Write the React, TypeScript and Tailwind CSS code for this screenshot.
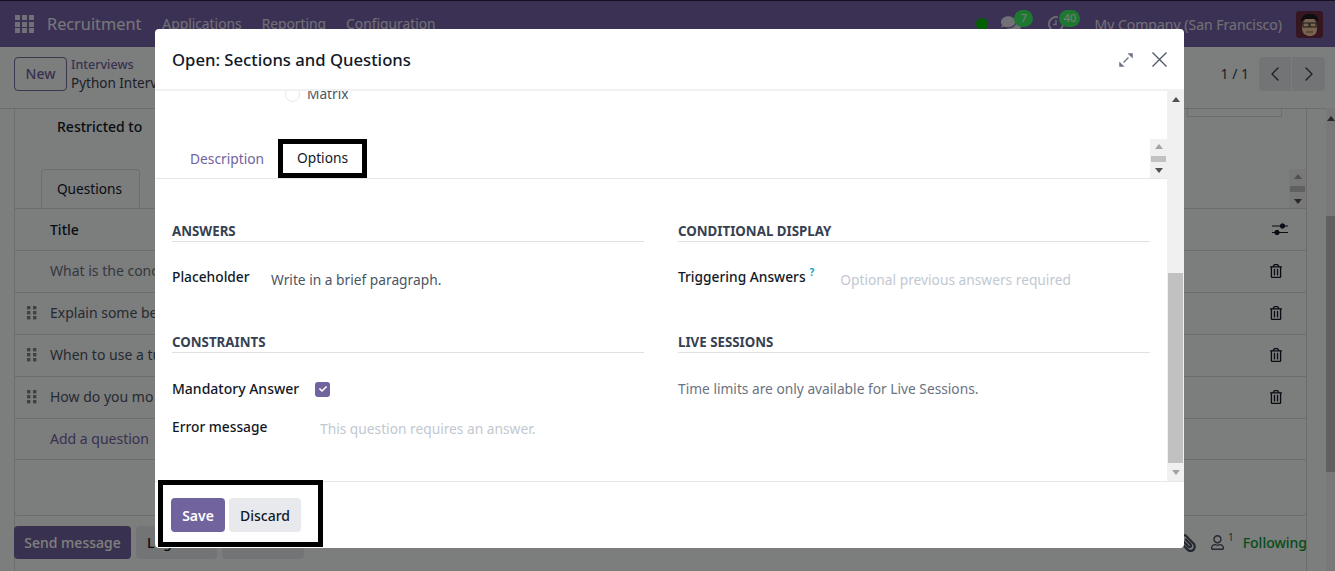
import { ChevronLeft, ChevronRight } from "lucide-react";
import { FaCheck, FaComments, FaPaperclip, FaRegTrashAlt, FaRegUser } from "react-icons/fa";

const rows = [
  { title: "What is the conc", grip: false },
  { title: "Explain some be", grip: true },
  { title: "When to use a tu", grip: true },
  { title: "How do you mo", grip: true },
];

function Grip() {
  return (
    <svg width="10" height="14" viewBox="0 0 10 14" className="fill-[#7b8290]">
      <rect x="0" y="0" width="3.4" height="3.4" />
      <rect x="6" y="0" width="3.4" height="3.4" />
      <rect x="0" y="5" width="3.4" height="3.4" />
      <rect x="6" y="5" width="3.4" height="3.4" />
      <rect x="0" y="10" width="3.4" height="3.4" />
      <rect x="6" y="10" width="3.4" height="3.4" />
    </svg>
  );
}

function MiniScroll() {
  return (
    <div className="w-[17px] h-full flex flex-col items-center justify-between py-[5px] bg-[#f0f0f0]">
      <div className="w-0 h-0 border-x-[4px] border-x-transparent border-b-[5px] border-b-[#a3a3a3]" />
      <div className="w-[15px] h-[6px] bg-[#c1c1c1]" />
      <div className="w-0 h-0 border-x-[4px] border-x-transparent border-t-[5px] border-t-[#505050]" />
    </div>
  );
}

function Background() {
  return (
    <div className="w-full h-full flex flex-col bg-[#f9fafb]">
      <div className="h-[47px] shrink-0 border-t border-[#2a2140] bg-[#7662a8] flex items-center text-white/90 pl-[15px]">
        <div className="grid grid-cols-3 gap-[1.5px] w-[19px] mr-[13px]">
          {Array.from({ length: 9 }).map((_, i) => (
            <div key={i} className="h-[5px] bg-white/80" />
          ))}
        </div>
        <span className="text-[16.3px] mr-[21px]">Recruitment</span>
        <span className="text-[13.8px] mr-[20px] text-white/80">Applications</span>
        <span className="text-[13.8px] mr-[20px] text-white/80">Reporting</span>
        <span className="text-[13.8px] text-white/80">Configuration</span>
        <div className="ml-auto flex items-center pr-[12px]">
          <div className="w-[12px] h-[12px] rounded-full bg-[#00c000] mr-[13px]" />
          <div className="relative mr-[27px]">
            <FaComments className="text-[20px] text-white/80" />
            <span className="absolute -top-[4px] left-[13px] w-[19px] h-[17px] rounded-full bg-[#3cf064] text-[11px] flex items-center justify-center">7</span>
          </div>
          <div className="relative mr-[30px] w-[16px] h-[16px]">
            <svg width="16" height="16" viewBox="0 0 16 16" fill="none" className="stroke-white/70">
              <path d="M10 1.4A7 7 0 1 0 15 8" strokeWidth="2" />
              <path d="M8 4v4.5H5" strokeWidth="1.5" />
            </svg>
            <span className="absolute -top-[6px] left-[11px] w-[21px] h-[17px] rounded-full bg-[#3cf064] text-[11px] flex items-center justify-center">40</span>
          </div>
          <span className="text-[14px] text-white/80 mr-[14px]">My Company (San Francisco)</span>
          <svg width="27" height="27" viewBox="0 0 27 27">
            <rect width="27" height="27" rx="3" fill="#6d2f43" />
            <path d="M6 17c0-7 3-10 8-10s7 4 7 10-3 8-7 8-8-2-8-8z" fill="#f0c9a0" />
            <path d="M5 11c0-6 5-9 10-8 5 0 8 3 7 8l-3-3H9z" fill="#1d1d1d" />
            <rect x="7" y="12" width="6" height="4" fill="none" stroke="#333" />
            <rect x="14" y="12" width="6" height="4" fill="none" stroke="#333" />
            <path d="M10 21h7" stroke="#9a5a3a" />
          </svg>
        </div>
      </div>

      <div className="h-[62px] shrink-0 border-b border-[#d8dadd] flex items-center pl-[14px] pr-[10px] pb-[8px]">
        <div className="w-[53px] h-[34px] border border-[#776a9b] rounded-[4px] flex items-center justify-center text-[14px] font-medium text-[#71639e]">New</div>
        <div className="ml-[4px] leading-[19px]">
          <div className="text-[12.5px] font-medium text-[#71639e]">Interviews</div>
          <div className="text-[13.5px] text-[#374151]">Python Interview</div>
        </div>
        <div className="ml-auto flex items-center">
          <span className="text-[14px] text-[#374151] mr-[10px]">1 / 1</span>
          <div className="w-[32px] h-[34px] bg-[#e7e9ed] rounded-l-[4px] flex items-center justify-center">
            <ChevronLeft size={24} strokeWidth={1.4} className="text-[#374151]" />
          </div>
          <div className="w-[33px] h-[34px] ml-px bg-[#e7e9ed] rounded-r-[4px] flex items-center justify-center">
            <ChevronRight size={24} strokeWidth={1.4} className="text-[#374151]" />
          </div>
        </div>
      </div>

      <div className="flex-1 flex min-h-0">
        <div className="w-[1293px] ml-[14px] border-x border-[#d8dadd] flex flex-col">
          <div className="h-[60px] shrink-0 pl-[42px] flex justify-between text-[14px] font-medium text-[#111827]">
            <span className="pt-[7px]">Restricted to</span>
            <div className="w-[95px] h-[8px] mr-[24px] border border-t-0 border-[#d8dadd]" />
          </div>
          <div className="h-[40px] shrink-0 pl-[26px] flex">
            <div className="w-[99px] border border-b-0 border-[#d8dadd] rounded-t-[4px] flex items-center justify-center text-[13.7px] text-[#111827] pr-[2px]">Questions</div>
            <div className="ml-auto"><MiniScroll /></div>
          </div>
        </div>
      </div>
    </div>
  );
}

function BackgroundTable() {
  return (
    <div className="absolute left-[14px] top-[208px] w-[1293px] h-[308px] border border-[#d8dadd] rounded-b-[4px] flex flex-col text-[14px]">
      <div className="h-[42px] shrink-0 border-b border-[#d8dadd] flex items-center pl-[35px] pr-[18px] pb-[1px] justify-between">
        <span className="font-medium text-[#111827]">Title</span>
        <svg width="16" height="14" viewBox="0 0 16 14" className="stroke-[#111827] fill-[#111827]">
          <path d="M0 4h16M0 10.5h16" strokeWidth="1.2" />
          <circle cx="10.5" cy="4" r="2.2" />
          <circle cx="5" cy="10.5" r="2.2" />
        </svg>
      </div>
      {rows.map((r) => (
        <div key={r.title} className="h-[42px] shrink-0 border-b border-[#d8dadd] flex items-center pr-[23px] pb-[2px]">
          <div className="w-[35px] pl-[12px] flex items-center">{r.grip && <Grip />}</div>
          <span className={r.grip ? "text-[#4b5563]" : "text-[#6b7280]"}>{r.title}</span>
          <FaRegTrashAlt className="ml-auto text-[14px] text-[#111827]" />
        </div>
      ))}
      <div className="h-[41px] shrink-0 border-b border-[#d8dadd] flex items-center pl-[35px] pb-[1px] text-[#71639e]">Add a question</div>
    </div>
  );
}

function BackgroundFooter() {
  return (
    <div className="absolute left-[14px] right-0 top-[526px] h-[33px] flex items-center text-[14px]">
      <div className="w-[117px] h-full rounded-[4px] bg-[#71639e] text-white font-medium flex items-center justify-center">Send message</div>
      <div className="w-[81px] h-full ml-[5px] rounded-[4px] bg-[#e7e9ed] flex items-center pl-[11px] font-medium text-[#111827]">Log note</div>
      <div className="w-[82px] h-full ml-[5px] rounded-[4px] bg-[#e7e9ed]" />
      <div className="ml-auto mr-[28px] flex items-center">
        <FaPaperclip className="text-[18px] text-[#4b5563] mr-[13px] -scale-x-100" />
        <FaRegUser className="text-[15px] text-[#4b5563]" />
        <span className="text-[10px] text-[#4b5563] -mt-[10px] ml-[3px] mr-[9px]">1</span>
        <span className="font-medium text-[#0a9a30]">Following</span>
      </div>
    </div>
  );
}

function SectionTitle({ children }: { children: React.ReactNode }) {
  return (
    <div className="h-[21px] border-b border-[#dee2e6] text-[13.3px] leading-[20px] font-bold text-[#374151]">
      {children}
    </div>
  );
}

function Modal() {
  return (
    <div className="absolute left-[155px] top-[29px] w-[1029px] h-[519px] bg-white rounded-[4px] flex flex-col overflow-hidden">
      <div className="h-[62px] shrink-0 border-b-2 border-[#f1f1f2] flex items-center pl-[17px] pr-[17px] pt-[1px]">
        <h1 className="text-[16.7px] font-medium text-[#111827]">Open: Sections and Questions</h1>
        <svg width="14" height="14" viewBox="0 0 14 14" className="ml-auto mr-[19px] fill-[#6b7280] stroke-[#6b7280]">
          <path d="M4.5 9.5l5-5" strokeWidth="1.2" />
          <path d="M9 0.5h4.5v4.5zM0.5 9v4.5H5z" strokeWidth="0.5" />
        </svg>
        <svg width="15" height="15" viewBox="0 0 15 15" className="stroke-[#4b5563]">
          <path d="M0.5 0.5l14 14M14.5 0.5l-14 14" strokeWidth="1.3" />
        </svg>
      </div>

      <div className="flex-1 flex min-h-0">
        <div className="flex-1 min-w-0 flex flex-col overflow-hidden">
          <div className="h-[55px] shrink-0 pl-[130px] flex items-start -mt-[6px]">
            <div className="w-[15px] h-[15px] mt-[2px] rounded-full border border-[#e5e7eb]" />
            <span className="ml-[7px] text-[13.7px] leading-[18px] text-[#4b5563]">Matrix</span>
          </div>
          <div className="h-[39px] shrink-0 border-b border-[#e5e7eb] flex relative text-[13.75px]">
            <div className="w-[123px] pl-[35px] flex items-center text-[#71639e]">Description</div>
            <div className="w-[89px] -mt-[1px] border-[5px] border-black flex items-center justify-center text-[#111827]">Options</div>
            <div className="absolute right-0 -top-[1px] h-[39px]"><MiniScroll /></div>
          </div>

          <div className="grid grid-cols-2 gap-x-[34px] pl-[17px] pr-[17px] pt-[42px] text-[13.75px]">
            <div className="flex flex-col">
              <SectionTitle>ANSWERS</SectionTitle>
              <div className="h-[90px] pt-[25px] flex items-start">
                <span className="w-[99px] font-medium text-[#111827] leading-[20px]">Placeholder</span>
                <span className="mt-[3px] leading-[20px] text-[#4b5563]">Write in a brief paragraph.</span>
              </div>
              <SectionTitle>CONSTRAINTS</SectionTitle>
              <div className="h-[47px] pt-[25px] flex items-center">
                <span className="w-[143px] text-[14px] font-medium text-[#111827] leading-[20px]">Mandatory Answer</span>
                <span className="w-[15px] h-[15px] rounded-[3px] bg-[#71639e] flex items-center justify-center text-white">
                  <FaCheck className="text-[8px]" />
                </span>
              </div>
              <div className="pt-[17px] flex items-start">
                <span className="w-[148px] font-medium text-[#111827] leading-[20px]">Error message</span>
                <span className="mt-[2px] leading-[20px] text-[#c1c8d1]">This question requires an answer.</span>
              </div>
            </div>
            <div className="flex flex-col">
              <SectionTitle>CONDITIONAL DISPLAY</SectionTitle>
              <div className="h-[90px] pt-[25px] flex items-start">
                <span className="font-medium text-[#111827] leading-[20px]">Triggering Answers</span>
                <span className="ml-[4px] -mt-[2px] text-[10px] font-bold leading-[14px] text-[#0ea5c9]">?</span>
                <span className="ml-[26px] mt-[3px] leading-[20px] text-[#c1c8d1]">Optional previous answers required</span>
              </div>
              <SectionTitle>LIVE SESSIONS</SectionTitle>
              <div className="pt-[26px] leading-[20px] text-[#6b7280]">Time limits are only available for Live Sessions.</div>
            </div>
          </div>
        </div>

        <div className="w-[17px] shrink-0 bg-[#f0f0f0] flex flex-col items-center pt-[6px] pb-[6px]">
          <div className="w-0 h-0 border-x-[4px] border-x-transparent border-b-[5px] border-b-[#505050]" />
          <div className="mt-[171px] w-[15px] h-[190px] bg-[#c1c1c1]" />
          <div className="mt-auto w-0 h-0 border-x-[4px] border-x-transparent border-t-[5px] border-t-[#a3a3a3]" />
        </div>
      </div>

      <div className="h-[67px] shrink-0 border-t border-[#e5e7eb] flex items-center pl-[16px] gap-[4px] text-[14px] font-medium">
        <button className="w-[54px] h-[34px] rounded-[4px] bg-[#71639e] text-white font-semibold">Save</button>
        <button className="w-[72px] h-[34px] rounded-[4px] bg-[#e7e9ed] text-[#111827]">Discard</button>
      </div>
      <div className="absolute left-[3px] top-[451px] w-[165px] h-[67px] border-[5px] border-black" />
    </div>
  );
}

export default function App() {
  return (
    <div className="relative w-[1335px] h-[571px] overflow-hidden font-['Noto_Sans',sans-serif]">
      <Background />
      <BackgroundTable />
      <BackgroundFooter />
      <div className="absolute right-0 top-[108px] bottom-0 w-[9px] bg-[#f0f0f0] flex flex-col items-center">
        <div className="mt-[8px] w-0 h-0 border-x-[4px] border-x-transparent border-b-[5px] border-b-[#505050]" />
        <div className="mt-[95px] w-full h-[256px] bg-[#c1c1c1]" />
      </div>
      <div className="absolute inset-0 bg-black/50" />
      <Modal />
    </div>
  );
}
